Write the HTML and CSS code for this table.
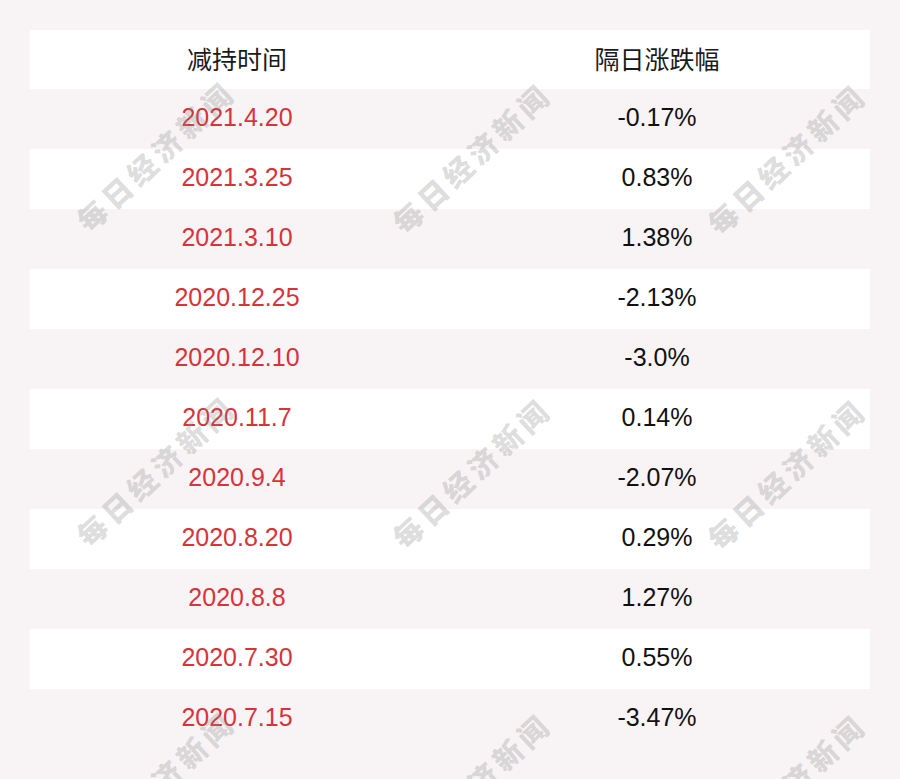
FILE: index.html
```html
<!DOCTYPE html>
<html lang="zh">
<head>
<meta charset="utf-8">
<link rel="stylesheet" href="styles.css">
</head>
<body>
<div class="page">
  <div class="table">
    <div class="row head"><div class="c1">减持时间</div><div class="c2">隔日涨跌幅</div></div>
    <div class="row"><div class="c1 date">2021.4.20</div><div class="c2">-0.17%</div></div>
    <div class="row alt"><div class="c1 date">2021.3.25</div><div class="c2">0.83%</div></div>
    <div class="row"><div class="c1 date">2021.3.10</div><div class="c2">1.38%</div></div>
    <div class="row alt"><div class="c1 date">2020.12.25</div><div class="c2">-2.13%</div></div>
    <div class="row"><div class="c1 date">2020.12.10</div><div class="c2">-3.0%</div></div>
    <div class="row alt"><div class="c1 date">2020.11.7</div><div class="c2">0.14%</div></div>
    <div class="row"><div class="c1 date">2020.9.4</div><div class="c2">-2.07%</div></div>
    <div class="row alt"><div class="c1 date">2020.8.20</div><div class="c2">0.29%</div></div>
    <div class="row"><div class="c1 date">2020.8.8</div><div class="c2">1.27%</div></div>
    <div class="row alt"><div class="c1 date">2020.7.30</div><div class="c2">0.55%</div></div>
    <div class="row"><div class="c1 date">2020.7.15</div><div class="c2">-3.47%</div></div>
  </div>
  <div class="wm" style="left:155px;top:155px">每日经济新闻</div>
  <div class="wm" style="left:471px;top:157px">每日经济新闻</div>
  <div class="wm" style="left:786px;top:158px">每日经济新闻</div>
  <div class="wm" style="left:155px;top:470px">每日经济新闻</div>
  <div class="wm" style="left:471px;top:472px">每日经济新闻</div>
  <div class="wm" style="left:786px;top:473px">每日经济新闻</div>
  <div class="wm" style="left:155px;top:785px">每日经济新闻</div>
  <div class="wm" style="left:471px;top:787px">每日经济新闻</div>
  <div class="wm" style="left:786px;top:788px">每日经济新闻</div>
</div>
</body>
</html>
```
FILE: styles.css
```css
html, body {
  margin: 0;
  padding: 0;
  background: #f8f4f5;
}
.page {
  position: relative;
  width: 900px;
  height: 779px;
  overflow: hidden;
  padding-top: 30px;
  box-sizing: border-box;
}
.table {
  margin: 0 30px;
  display: flex;
  flex-direction: column;
}
.row {
  display: grid;
  grid-template-columns: 414px 1fr;
  height: 60px;
  box-sizing: border-box;
  padding-bottom: 3px;
  align-items: center;
  font-family: "Liberation Sans", Arial, "Noto Sans CJK SC", sans-serif;
  font-size: 25px;
  color: #111;
}
.row.head {
  height: 59px;
  background: #fff;
  font-family: "Noto Sans CJK SC", "Liberation Sans", sans-serif;
  font-size: 25px;
  color: #1a1a1a;
}
.row.alt {
  background: #fff;
}
.c1, .c2 {
  text-align: center;
}
.date {
  color: #d8323b;
}
.wm {
  position: absolute;
  transform: translate(-50%, -50%) rotate(-43deg);
  font-family: "Noto Sans CJK SC", sans-serif;
  font-weight: 900;
  font-size: 29px;
  letter-spacing: 5px;
  white-space: nowrap;
  color: rgba(140, 140, 140, 0.3);
  pointer-events: none;
}
```
